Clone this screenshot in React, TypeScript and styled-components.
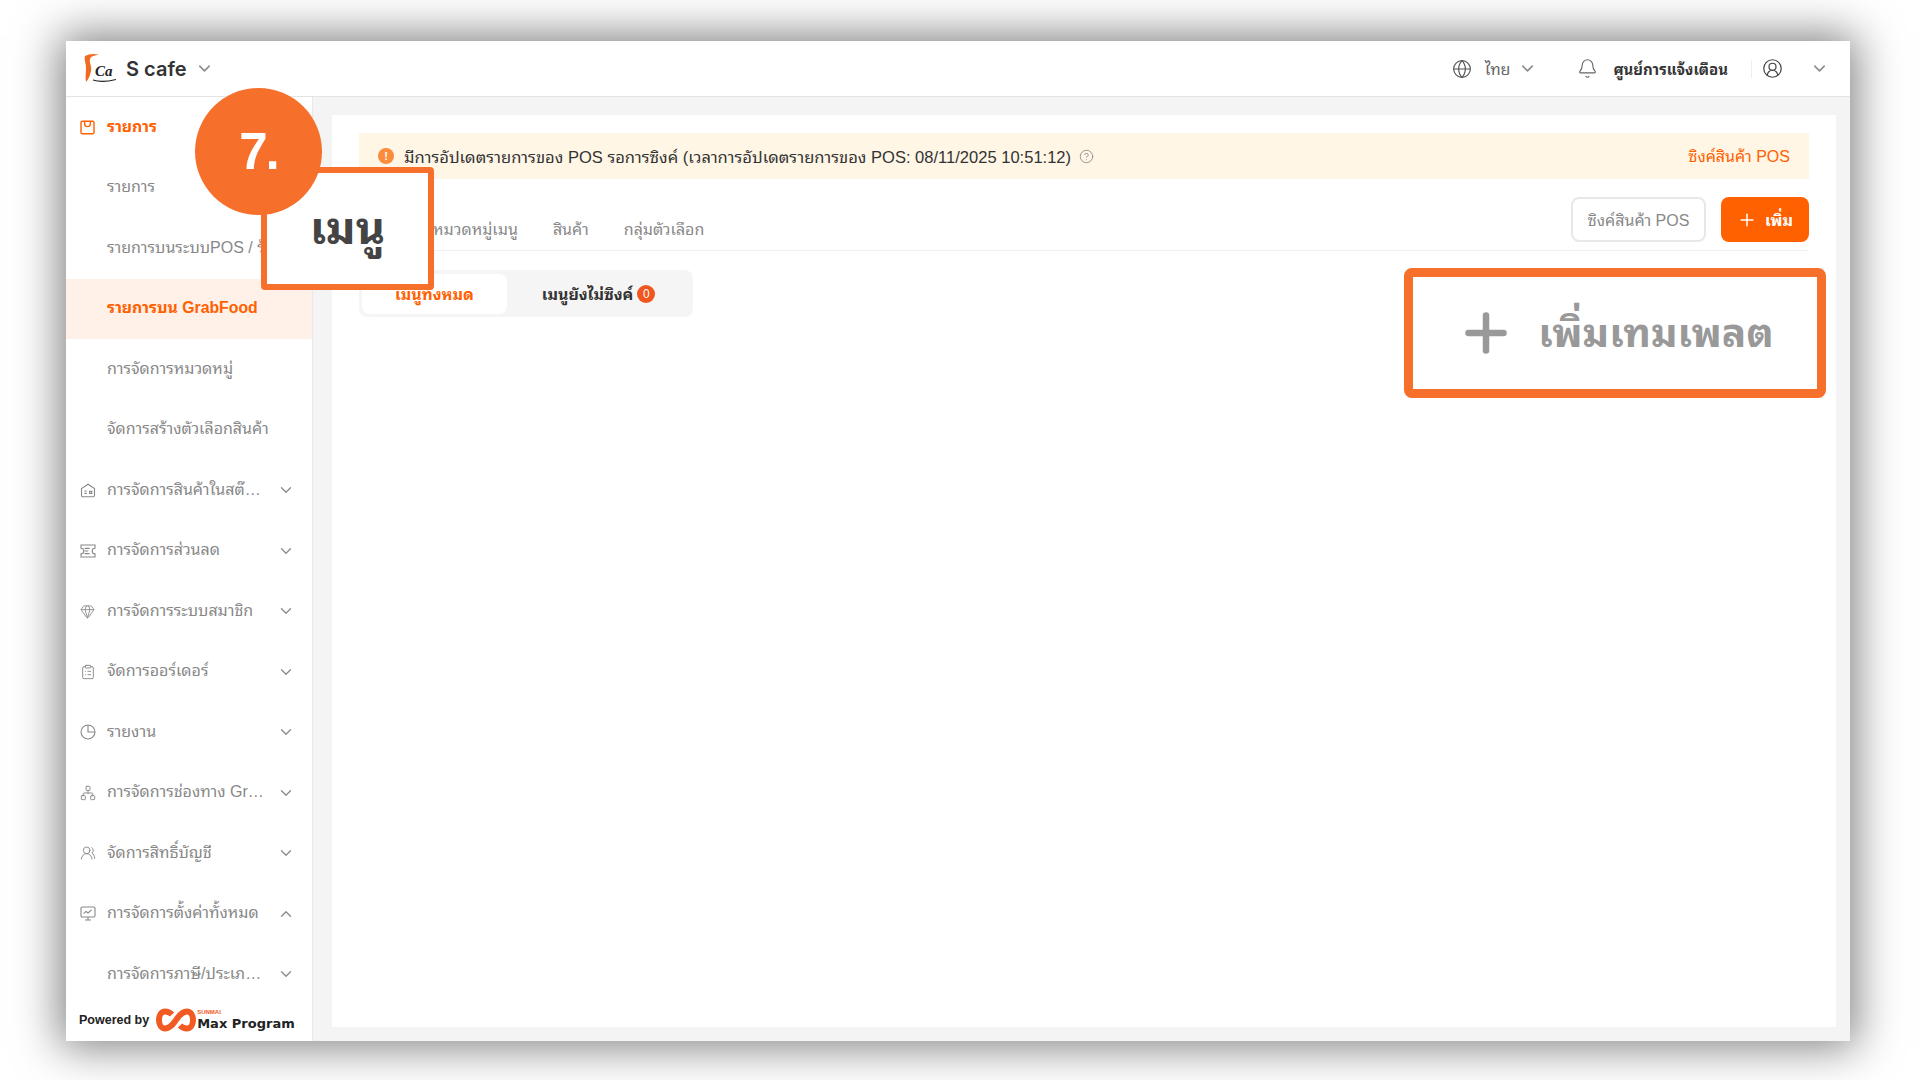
import React from 'react';
import styled, { createGlobalStyle } from 'styled-components';
import {
    Bell,
    ChevronDown,
    ChevronUp,
    CircleHelp,
    CircleUserRound,
    ClipboardList,
    Gem,
    Globe,
    Network,
    Plus,
    UsersRound,
} from 'lucide-react';

const GRAY = '#888888';
const ORANGE = '#ff6000';
const MARK = '#f6702c';

const BagIcon = () => (
    <svg width="15" height="15" viewBox="0 0 15 15" fill="none" stroke="currentColor" strokeWidth="1.4">
        <rect x="1" y="1.2" width="13" height="12.6" rx="1.4" />
        <path d="M4.6 1.5v2.2a2.9 2.9 0 0 0 5.8 0V1.5" />
    </svg>
);

const StoreIcon = () => (
    <svg width="16" height="15" viewBox="0 0 16 15" fill="none" stroke="currentColor" strokeWidth="1.1">
        <path d="M1.5 5.6 8 1.2l6.5 4.4v7a1.2 1.2 0 0 1-1.2 1.2H2.7a1.2 1.2 0 0 1-1.2-1.2z" />
        <path d="M4.4 8h2.4M4.4 10.4h2.4M9.6 8.4h2.2v2h-2.2z" />
    </svg>
);

const CouponIcon = () => (
    <svg width="16" height="14" viewBox="0 0 16 14" fill="none" stroke="currentColor" strokeWidth="1.1">
        <path d="M1 1h14v3.2a2.8 2.8 0 0 0 0 5.6V13H1V9.8a2.8 2.8 0 0 0 0-5.6z" />
        <path d="M4.6 4.400h5M4.600 7h3.600M4.600 9.600h5" />
    </svg>
);

const ClockIcon = () => (
    <svg width="16" height="16" viewBox="0 0 16 16" fill="none" stroke="currentColor" strokeWidth="1.1">
        <circle cx="8" cy="8" r="7" />
        <path d="M8 1v7h7" />
    </svg>
);

const ScreenIcon = () => (
    <svg width="16" height="15" viewBox="0 0 16 15" fill="none" stroke="currentColor" strokeWidth="1.1">
        <rect x="1" y="1" width="14" height="10" rx="1.2" />
        <path d="M5 14h6M8 11v3M3.600 7.600 6 5.400l2 1.600 3.600-3.200" />
    </svg>
);

const BrandLogo = () => (
    <svg width="34" height="32" viewBox="0 0 34 32">
        <path
            d="M2 3C6 1 11 0 16 2 12 2 8 3 7 6 6 10 9 13 8 18 7 23 5 27 3 29 2 24 3 20 3 15 3 10 1 7 2 3Z"
            fill="#f26a21"
        />
        <text x="12" y="23" fontFamily="'Liberation Serif', serif" fontStyle="italic" fontWeight="700" fontSize="15" fill="#222">
            Ca
        </text>
        <path d="M10 27c6 2 15 1.500 23-.5" stroke="#222" strokeWidth="1.100" fill="none" />
    </svg>
);

const InfinityLogo = () => (
    <svg width="40" height="24" viewBox="0 0 40 24" fill="none">
        <path
            d="M16 6.500C13.500 4 11 3.500 9 3.500 5.500 3.500 3 7 3 12s2.500 8.500 6 8.500c6 0 9-6 11-8.500s5-8.500 11-8.500c3.500 0 6 3.500 6 8.500s-2.500 8.500-6 8.500c-2 0-4.500-.5-7-3"
            stroke="#f15a22"
            strokeWidth="6"
        />
    </svg>
);

type MenuEntry = {
    label: string;
    icon?: React.ReactNode;
    tone?: 'head' | 'picked';
    arrow?: 'down' | 'up';
};

const menu: MenuEntry[] = [
    { label: 'รายการ', icon: <BagIcon />, tone: 'head' },
    { label: 'รายการ' },
    { label: 'รายการบนระบบPOS / ร้านค้า' },
    { label: 'รายการบน GrabFood', tone: 'picked' },
    { label: 'การจัดการหมวดหมู่' },
    { label: 'จัดการสร้างตัวเลือกสินค้า' },
    { label: 'การจัดการสินค้าในสต๊อกทั้งหมด', icon: <StoreIcon />, arrow: 'down' },
    { label: 'การจัดการส่วนลด', icon: <CouponIcon />, arrow: 'down' },
    { label: 'การจัดการระบบสมาชิก', icon: <Gem size={15} strokeWidth={1.4} />, arrow: 'down' },
    { label: 'จัดการออร์เดอร์', icon: <ClipboardList size={16} strokeWidth={1.4} />, arrow: 'down' },
    { label: 'รายงาน', icon: <ClockIcon />, arrow: 'down' },
    { label: 'การจัดการช่องทาง GrabFood', icon: <Network size={16} strokeWidth={1.4} />, arrow: 'down' },
    { label: 'จัดการสิทธิ์บัญชี', icon: <UsersRound size={16} strokeWidth={1.4} />, arrow: 'down' },
    { label: 'การจัดการตั้งค่าทั้งหมด', icon: <ScreenIcon />, arrow: 'up' },
    { label: 'การจัดการภาษี/ประเภทสินค้า', arrow: 'down' },
];

const App: React.FC = () => (
    <>
        <GlobalStyle />
        <Page>
            <Window>
                <TopBar>
                    <BrandLogo />
                    <ShopName>S cafe</ShopName>
                    <ChevronDown size={19} color="#8c8c8c" />
                    <TopRight>
                        <Globe size={20} strokeWidth={1.4} color="#555" />
                        <Lang>ไทย</Lang>
                        <ChevronDown size={19} color="#8c8c8c" />
                        <BellWrap>
                            <Bell size={21} strokeWidth={1.3} color="#666" />
                        </BellWrap>
                        <NoticeLabel>ศูนย์การแจ้งเตือน</NoticeLabel>
                        <Divider />
                        <CircleUserRound size={21} strokeWidth={1.4} color="#444" />
                        <UserArrow>
                            <ChevronDown size={19} color="#8c8c8c" />
                        </UserArrow>
                    </TopRight>
                </TopBar>
                <Body>
                    <Sidebar>
                        <MenuList>
                            {menu.map((m, i) => (
                                <MenuRow key={i} $tone={m.tone}>
                                    <MenuIcon>{m.icon}</MenuIcon>
                                    <MenuLabel>{m.label}</MenuLabel>
                                    {m.arrow === 'down' && <ChevronDown size={18} strokeWidth={1.8} color="#8c8c8c" />}
                                    {m.arrow === 'up' && <ChevronUp size={18} strokeWidth={1.8} color="#8c8c8c" />}
                                </MenuRow>
                            ))}
                        </MenuList>
                        <Footer>
                            <Powered>Powered by</Powered>
                            <InfinityLogo />
                            <MaxBrand>
                                <MaxSmall>SUNMAI</MaxSmall>
                                <MaxName>Max Program</MaxName>
                            </MaxBrand>
                        </Footer>
                    </Sidebar>
                    <Content>
                        <Card>
                            <Banner>
                                <AlertDot>!</AlertDot>
                                <BannerText>
                                    มีการอัปเดตรายการของ POS รอการซิงค์ (เวลาการอัปเดตรายการของ POS: 08/11/2025 10:51:12)
                                </BannerText>
                                <CircleHelp size={15} strokeWidth={1.4} color="#8c8c8c" />
                                <BannerLink>ซิงค์สินค้า POS</BannerLink>
                            </Banner>
                            <TabRow>
                                <Tab>หมวดหมู่เมนู</Tab>
                                <Tab>สินค้า</Tab>
                                <Tab>กลุ่มตัวเลือก</Tab>
                                <TabActions>
                                    <GhostButton>ซิงค์สินค้า POS</GhostButton>
                                    <PrimaryButton>
                                        <Plus size={20} strokeWidth={1.8} />
                                        <ButtonLabel>เพิ่ม</ButtonLabel>
                                    </PrimaryButton>
                                </TabActions>
                            </TabRow>
                            <Segment>
                                <SegmentItem $active>
                                    <SegmentLabel>เมนูทั้งหมด</SegmentLabel>
                                </SegmentItem>
                                <SegmentItem>
                                    <SegmentLabel>เมนูยังไม่ซิงค์</SegmentLabel>
                                    <CountBadge>0</CountBadge>
                                </SegmentItem>
                            </Segment>
                        </Card>
                    </Content>
                </Body>
            </Window>
            <StepCircle>7.</StepCircle>
            <StepLabel>เมนู</StepLabel>
            <TemplateMark>
                <Plus size={60} strokeWidth={2.6} color="#999" />
                <TemplateText>เพิ่มเทมเพลต</TemplateText>
            </TemplateMark>
        </Page>
    </>
);

const GlobalStyle = createGlobalStyle`
    html, body {
        margin: 0;
        background: #fff;
    }

    * {
        box-sizing: border-box;
    }
`;

const Page = styled.div`
    position: relative;
    width: 1920px;
    height: 1080px;
    padding: 41px 70px 39px 66px;
    overflow: hidden;
    font-family: 'Liberation Sans', 'Noto Sans Thai Looped', Loma, Garuda, Waree, 'Noto Sans', sans-serif;
    background: #fff;
`;

const Window = styled.div`
    width: 1784px;
    height: 1000px;
    display: flex;
    flex-direction: column;
    background: #fff;
    box-shadow: 0 0 42px 6px rgba(0, 0, 0, 0.5);
`;

const TopBar = styled.header`
    flex: 0 0 56px;
    display: flex;
    align-items: center;
    gap: 8px;
    padding: 0 21px 0 17px;
    border-bottom: 1px solid #e4e4e4;
`;

const ShopName = styled.div`
    margin-left: 1px;
    font-family: Inter, sans-serif;
    font-size: 20px;
    font-weight: 600;
    color: #333;
`;

const TopRight = styled.div`
    margin-left: auto;
    display: flex;
    align-items: center;
`;

const Lang = styled.span`
    margin: 0 8px 2px 13px;
    font-size: 16px;
    color: #666;
`;

const BellWrap = styled.span`
    display: flex;
    margin: 0 15px 0 40px;
`;

const NoticeLabel = styled.span`
    margin-bottom: 2px;
    font-size: 15px;
    font-weight: 700;
    color: #333;
`;

const Divider = styled.span`
    width: 1px;
    height: 18px;
    margin: 0 10px 0 23px;
    background: #eee;
`;

const UserArrow = styled.span`
    display: flex;
    margin-left: 27px;
`;

const Body = styled.div`
    flex: 1;
    min-height: 0;
    display: flex;
`;

const Sidebar = styled.aside`
    flex: 0 0 247px;
    min-width: 0;
    display: flex;
    flex-direction: column;
    border-right: 1px solid #e8e8e8;
`;

const MenuList = styled.nav`
    flex: 1;
    min-height: 0;
    overflow: hidden;
`;

const MenuRow = styled.div<{ $tone?: 'head' | 'picked' }>`
    height: 60.5px;
    display: flex;
    align-items: center;
    padding: 0 17px 0 14px;
    font-size: ${p => (p.$tone ? '15.800px' : '16px')};
    font-weight: ${p => (p.$tone ? 700 : 400)};
    color: ${p => (p.$tone ? ORANGE : GRAY)};
    background: ${p => (p.$tone === 'picked' ? '#fff0e8' : 'transparent')};
`;

const MenuIcon = styled.span`
    flex: 0 0 27px;
    display: flex;
    align-items: center;
`;

const MenuLabel = styled.span`
    flex: 1;
    min-width: 0;
    margin-right: 12px;
    padding-bottom: 1px;
    line-height: 26px;
    white-space: nowrap;
    overflow: hidden;
    text-overflow: ellipsis;
`;

const Footer = styled.div`
    flex: 0 0 44px;
    display: flex;
    align-items: center;
    padding: 2px 0 0 13px;
`;

const Powered = styled.span`
    margin-right: 7px;
    font-size: 12.500px;
    font-weight: 700;
    color: #222;
    white-space: nowrap;
`;

const MaxBrand = styled.span`
    display: flex;
    flex-direction: column;
    margin-left: 1px;
`;

const MaxSmall = styled.span`
    height: 6px;
    font-size: 6px;
    line-height: 6px;
    font-weight: 700;
    color: #f15a22;
`;

const MaxName = styled.span`
    font-family: 'DejaVu Sans', sans-serif;
    font-size: 13px;
    line-height: 17px;
    font-weight: 700;
    color: #222;
    white-space: nowrap;
`;

const Content = styled.main`
    flex: 1;
    min-width: 0;
    display: flex;
    padding: 18px 14px 14px 19px;
    background: #f4f4f4;
`;

const Card = styled.section`
    flex: 1;
    padding: 18px 27px 0 27px;
    background: #fff;
`;

const Banner = styled.div`
    height: 46px;
    display: flex;
    align-items: center;
    gap: 8px;
    padding: 0 19px 0 19px;
    background: #fff6e6;
`;

const AlertDot = styled.span`
    width: 16px;
    height: 16px;
    margin-right: 2px;
    border-radius: 50%;
    display: flex;
    align-items: center;
    justify-content: center;
    font-size: 11px;
    font-weight: 700;
    color: #fff;
    background: #fa8c3c;
`;

const BannerText = styled.span`
    margin-bottom: 2px;
    font-size: 16.550px;
    color: #333;
`;

const BannerLink = styled.span`
    margin: 0 0 2px auto;
    font-size: 16px;
    color: ${ORANGE};
`;

const TabRow = styled.div`
    height: 72px;
    display: flex;
    align-items: center;
    gap: 35px;
    padding: 10px 0 0 74px;
    border-bottom: 1px solid #f0f0f0;
`;

const Tab = styled.span`
    padding-top: 16px;
    font-size: 16px;
    color: ${GRAY};
`;

const TabActions = styled.div`
    margin-left: auto;
    display: flex;
    gap: 15px;
`;

const GhostButton = styled.button`
    width: 135px;
    height: 45px;
    padding: 0 0 2px;
    border: 2px solid #e8e8e8;
    border-radius: 8px;
    background: #fff;
    font: inherit;
    font-size: 16px;
    color: ${GRAY};
`;

const PrimaryButton = styled.button`
    width: 88px;
    height: 45px;
    display: flex;
    align-items: center;
    justify-content: center;
    gap: 8px;
    border: 0;
    border-radius: 8px;
    background: ${ORANGE};
    font: inherit;
    font-size: 16px;
    font-weight: 700;
    color: #fff;
`;

const ButtonLabel = styled.span`
    padding-bottom: 2px;
`;

const Segment = styled.div`
    width: 334px;
    height: 47px;
    margin-top: 19px;
    display: flex;
    padding: 4px 3px 3px;
    border-radius: 8px;
    background: #f5f5f5;
`;

const SegmentItem = styled.div<{ $active?: boolean }>`
    flex: ${p => (p.$active ? '0 0 145px' : 1)};
    display: flex;
    align-items: center;
    justify-content: center;
    gap: 4px;
    border-radius: 8px;
    font-size: 16px;
    font-weight: 700;
    color: ${p => (p.$active ? ORANGE : '#333')};
    background: ${p => (p.$active ? '#fff' : 'transparent')};
`;

const SegmentLabel = styled.span`
    padding-bottom: 2px;
`;

const CountBadge = styled.span`
    width: 18px;
    height: 18px;
    border-radius: 50%;
    display: flex;
    align-items: center;
    justify-content: center;
    font-size: 12px;
    font-weight: 400;
    color: #fff;
    background: #f0561d;
`;

const StepLabel = styled.div`
    position: absolute;
    left: 261px;
    top: 167px;
    width: 173px;
    height: 123px;
    display: flex;
    align-items: center;
    justify-content: center;
    padding-bottom: 9px;
    border: 6px solid ${MARK};
    border-radius: 4px;
    background: #fff;
    font-size: 45px;
    font-weight: 700;
    color: #444;
`;

const StepCircle = styled.div`
    position: absolute;
    left: 195px;
    top: 88px;
    width: 127px;
    height: 127px;
    z-index: 1;
    display: flex;
    align-items: center;
    justify-content: center;
    border-radius: 50%;
    background: ${MARK};
    font-size: 51px;
    font-weight: 700;
    letter-spacing: -2px;
    color: #fff;
`;

const TemplateMark = styled.div`
    position: absolute;
    left: 1404px;
    top: 268px;
    width: 422px;
    height: 130px;
    display: flex;
    align-items: center;
    justify-content: center;
    gap: 22px;
    border: 9px solid ${MARK};
    border-radius: 8px;
    background: #fff;
`;

const TemplateText = styled.span`
    padding-bottom: 9px;
    font-size: 40.500px;
    font-weight: 700;
    color: #999;
    white-space: nowrap;
`;

export default App;
